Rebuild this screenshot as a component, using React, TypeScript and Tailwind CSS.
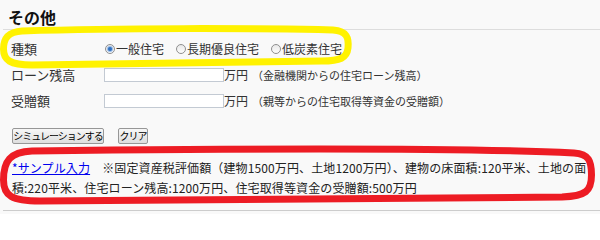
import type { ReactNode } from "react";

type RadioProps = {
  label: string;
  checked?: boolean;
};

function Radio({ label, checked = false }: RadioProps) {
  return (
    <label className="flex items-center">
      <span className="flex h-[10px] w-[10px] items-center justify-center rounded-full border border-[#8f8f8f] bg-[linear-gradient(#e9e9e9,#fdfdfd)]">
        {checked ? (
          <span className="h-[4px] w-[4px] rounded-full bg-[#2f6fc0] shadow-[0_0_1px_1px_#8fb4e3]" />
        ) : null}
      </span>
      <span className="ml-[1px] text-[12px]">{label}</span>
    </label>
  );
}

function Row({ label, children }: { label: string; children: ReactNode }) {
  return (
    <div className="flex h-[26px] items-center">
      <div className="w-[104px] pl-[11px] text-[13px]">{label}</div>
      <div className="flex items-center">{children}</div>
    </div>
  );
}

function AmountInput({ note }: { note: string }) {
  return (
    <>
      <input
        type="text"
        className="h-[14px] w-[120px] border border-[#c3cad3] bg-white outline-none"
      />
      <span className="text-[12px]">万円</span>
      <span className="ml-[4px] text-[11px]">{note}</span>
    </>
  );
}

export default function App() {
  return (
    <div className="relative h-[214px] w-[600px] overflow-hidden bg-[#f9f9f9] font-['Noto_Sans_CJK_JP',sans-serif] text-[#333]">
      <h2 className="ml-[3px] border-b border-[#dddddd] pb-[3px] pl-[5px] pt-[8px] text-[16px] font-bold leading-[18px] text-[#111]">
        その他
      </h2>

      <div className="mt-[6px]">
        <Row label="種類">
          <div className="ml-[1px] flex items-center gap-[12px]">
            <Radio label="一般住宅" checked />
            <Radio label="長期優良住宅" />
            <Radio label="低炭素住宅" />
          </div>
        </Row>
        <Row label="ローン残高">
          <AmountInput note="（金融機関からの住宅ローン残高）" />
        </Row>
        <Row label="受贈額">
          <AmountInput note="（親等からの住宅取得等資金の受贈額）" />
        </Row>
      </div>

      <div className="mt-[14px] flex gap-[14px] pl-[12px]">
        <button
          type="button"
          className="h-[16px] w-[92px] whitespace-nowrap rounded-[2px] border border-[#979797] bg-[linear-gradient(#f7f7f7,#dedede)] text-[10px] leading-[14px] tracking-[-1px] text-black"
        >
          シミュレーションする
        </button>
        <button
          type="button"
          className="h-[16px] w-[30px] whitespace-nowrap rounded-[2px] border border-[#979797] bg-[linear-gradient(#f7f7f7,#dedede)] text-[10px] leading-[14px] tracking-[-1px] text-black"
        >
          クリア
        </button>
      </div>

      <p className="mt-[14px] pl-[12px] pr-[6px] text-[12px] leading-[20px] tracking-[0.12px] text-[#222]">
        <a href="#" className="text-[#0000ee] underline">
          *サンプル入力
        </a>
        <span>
          {"　※固定資産税評価額（建物1500万円、土地1200万円）、建物の床面積:120平米、土地の面積:220平米、住宅ローン残高:1200万円、住宅取得等資金の受贈額:500万円"}
        </span>
      </p>

      <div className="ml-[3px] mt-[12px] border-t border-[#cccccc]" />

      <svg
        className="pointer-events-none absolute inset-0"
        width="600"
        height="214"
        viewBox="0 0 600 214"
        fill="none"
      >
        <path
          d="M 22 31 C 120 28, 250 28, 333 30 C 347 31, 349 38, 348 48 C 347 58, 340 61, 322 61 L 32 65 C 10 65, 3.5 60, 3.5 49 C 3.5 38, 8 32, 22 31 Z"
          stroke="#fff200"
          strokeWidth="7"
          strokeLinejoin="round"
        />
        <path
          d="M 32 151 C 200 149, 450 147, 574 153 C 589 154, 591.5 161, 591.5 175 C 591.5 191, 586 196, 562 197 L 40 201 C 12 201, 3.5 196, 3.5 180 C 3.5 161, 10 152, 32 151 Z"
          stroke="#ed1c24"
          strokeWidth="7"
          strokeLinejoin="round"
        />
      </svg>
    </div>
  );
}
